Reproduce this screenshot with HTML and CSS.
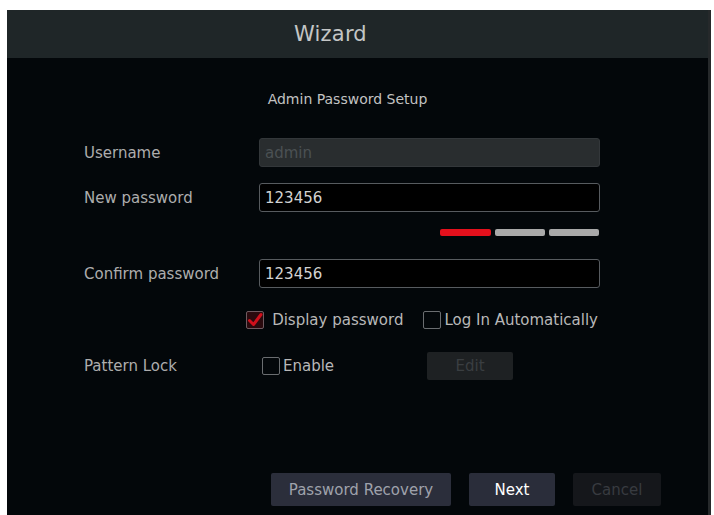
FILE: index.html
```html
<!DOCTYPE html>
<html>
<head>
<meta charset="utf-8">
<title>Wizard</title>
<link rel="stylesheet" href="styles.css">
</head>
<body>
<div class="panel">
  <div class="header"><span class="title">Wizard</span></div>
  <div class="subtitle">Admin Password Setup</div>
  <div class="form">
    <div class="row row-user">
      <div class="label">Username</div>
      <div class="field input disabled">admin</div>
    </div>
    <div class="row row-new">
      <div class="label">New password</div>
      <div class="field input">123456</div>
    </div>
    <div class="row row-strength">
      <div class="label"></div>
      <div class="field strength">
        <span class="bar bar-red"></span>
        <span class="bar bar-gray"></span>
        <span class="bar bar-gray"></span>
      </div>
    </div>
    <div class="row row-confirm">
      <div class="label">Confirm password</div>
      <div class="field input">123456</div>
    </div>
    <div class="checks">
      <div class="check">
        <span class="box checked">
          <svg viewBox="0 0 18 18" width="18" height="18"><path d="M3.5 9.5 L7.5 13.5 L15 3.5" fill="none" stroke="#d0101c" stroke-width="3" stroke-linecap="round" stroke-linejoin="round"/></svg>
        </span>
        <span class="check-text">Display password</span>
      </div>
      <div class="check check-auto">
        <span class="box"></span>
        <span class="check-text tight">Log In Automatically</span>
      </div>
    </div>
    <div class="row row-pattern">
      <div class="label">Pattern Lock</div>
      <div class="field pattern">
        <div class="check">
          <span class="box"></span>
          <span class="check-text tight">Enable</span>
        </div>
        <div class="btn btn-edit">Edit</div>
      </div>
    </div>
  </div>
  <div class="footer">
    <div class="btn btn-recovery">Password Recovery</div>
    <div class="btn btn-next">Next</div>
    <div class="btn btn-cancel">Cancel</div>
  </div>
</div>
</body>
</html>
```

FILE: styles.css
```css
html, body {
  margin: 0;
  padding: 0;
  background: #ffffff;
  height: 100%;
  overflow: hidden;
}

body {
  font-family: "DejaVu Sans", "Liberation Sans", sans-serif;
  font-size: 15px;
  color: #b9b9b9;
}

.panel {
  margin: 10px 0 0 7px;
  width: 701px;
  height: 505px;
  background: #03070a;
  border-right: 3px solid #26292b;
  display: flex;
  flex-direction: column;
}

.header {
  height: 48px;
  background: #1f2628;
  display: flex;
  align-items: center;
  justify-content: center;
  padding-right: 54px;
}

.title {
  font-size: 21px;
  color: #c4c6c6;
  letter-spacing: 0.2px;
}

.subtitle {
  margin-top: 31px;
  height: 20px;
  line-height: 20px;
  text-align: center;
  padding-right: 20px;
  color: #c2c2c2;
  font-size: 14px;
}

.form {
  margin-top: 29px;
  padding-left: 77px;
  display: flex;
  flex-direction: column;
}

.row {
  display: flex;
  align-items: center;
}

.label {
  width: 175px;
  flex: none;
  color: #adadad;
}

.field {
  width: 341px;
  flex: none;
  box-sizing: border-box;
}

.input {
  height: 29px;
  border: 1px solid #575b5f;
  border-radius: 3px;
  background: #000000;
  color: #d2d2d2;
  display: flex;
  align-items: center;
  padding-left: 5px;
}

.input.disabled {
  background: #292d2f;
  border-color: #33373a;
  color: #4b5154;
}

.row-new {
  margin-top: 16px;
}

.row-strength {
  margin-top: 17px;
}

.strength {
  display: flex;
  justify-content: flex-end;
  gap: 4px;
  padding-right: 1px;
}

.bar {
  display: block;
  width: 50px;
  height: 7px;
  border-radius: 2px;
}

.bar-red {
  width: 51px;
  background: #e4101c;
}

.bar-gray {
  background: #a9a9a9;
}

.row-confirm {
  margin-top: 23px;
}

.checks {
  margin-top: 22px;
  height: 20px;
  width: 516px;
  display: flex;
  justify-content: flex-end;
  align-items: center;
  gap: 20px;
}

.check {
  display: flex;
  align-items: center;
  gap: 8px;
}

.box {
  width: 18px;
  height: 18px;
  box-sizing: border-box;
  border: 1px solid #6a6d70;
  border-radius: 2px;
  display: block;
  flex: none;
  position: relative;
}

.box.checked {
  background: #2a0a0e;
  border-color: #6e5a60;
}

.box svg {
  position: absolute;
  left: -1px;
  top: -1px;
}

.check-text {
  color: #b8b8b8;
  white-space: nowrap;
}

.check-text.tight {
  margin-left: -5px;
}

.check-auto {
  margin-right: 2px;
}

.row-pattern {
  margin-top: 22px;
  height: 28px;
}

.pattern {
  display: flex;
  align-items: center;
  padding-left: 3px;
}

.btn {
  display: flex;
  align-items: center;
  justify-content: center;
  border-radius: 2px;
  white-space: nowrap;
}

.btn-edit {
  margin-left: 93px;
  width: 86px;
  height: 28px;
  background: #1e2123;
  color: #3a3e41;
}

.footer {
  margin-top: 93px;
  display: flex;
  justify-content: flex-end;
  padding-right: 47px;
  gap: 18px;
}

.footer .btn {
  height: 33px;
}

.btn-recovery {
  width: 180px;
  background: #2b2e3b;
  color: #9fa2ab;
}

.btn-next {
  width: 86px;
  background: #2a2d3a;
  color: #ffffff;
}

.btn-cancel {
  width: 88px;
  background: #15171b;
  color: #383b40;
}
```
